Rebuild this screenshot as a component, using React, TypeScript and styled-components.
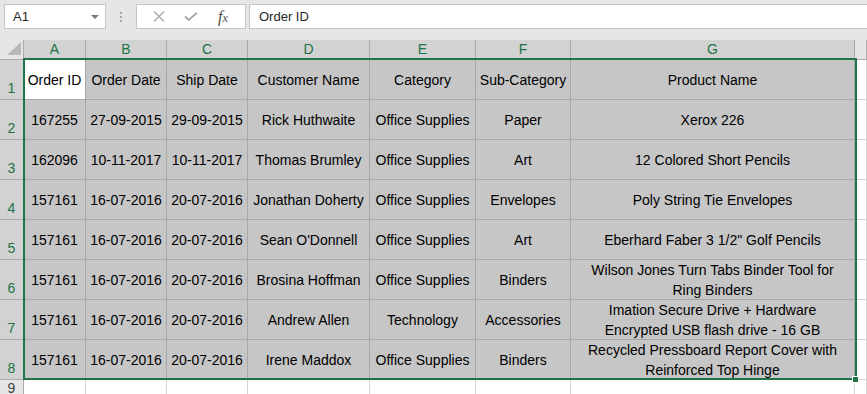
import React from 'react';
import styled, { createGlobalStyle } from 'styled-components';

const GREEN = '#217346';

const COLUMNS = [
  { key: 'A', width: 62 },
  { key: 'B', width: 81 },
  { key: 'C', width: 81 },
  { key: 'D', width: 122 },
  { key: 'E', width: 106 },
  { key: 'F', width: 95 },
  { key: 'G', width: 284, pad: 12 },
];

const ROWS = [
  ['Order ID', 'Order Date', 'Ship Date', 'Customer Name', 'Category', 'Sub-Category', 'Product Name'],
  ['167255', '27-09-2015', '29-09-2015', 'Rick Huthwaite', 'Office Supplies', 'Paper', 'Xerox 226'],
  ['162096', '10-11-2017', '10-11-2017', 'Thomas Brumley', 'Office Supplies', 'Art', '12 Colored Short Pencils'],
  ['157161', '16-07-2016', '20-07-2016', 'Jonathan Doherty', 'Office Supplies', 'Envelopes', 'Poly String Tie Envelopes'],
  ['157161', '16-07-2016', '20-07-2016', "Sean O'Donnell", 'Office Supplies', 'Art', 'Eberhard Faber 3 1/2" Golf Pencils'],
  ['157161', '16-07-2016', '20-07-2016', 'Brosina Hoffman', 'Office Supplies', 'Binders', 'Wilson Jones Turn Tabs Binder Tool for Ring Binders'],
  ['157161', '16-07-2016', '20-07-2016', 'Andrew Allen', 'Technology', 'Accessories', 'Imation Secure Drive + Hardware Encrypted USB flash drive - 16 GB'],
  ['157161', '16-07-2016', '20-07-2016', 'Irene Maddox', 'Office Supplies', 'Binders', 'Recycled Pressboard Report Cover with Reinforced Top Hinge'],
];

const GlobalStyle = createGlobalStyle`
  html, body {
    margin: 0;
    padding: 0;
    background: #ffffff;
  }
  body {
    font-family: 'Liberation Sans', Arial, sans-serif;
  }
  * {
    box-sizing: border-box;
  }
`;

export default function App() {
  return (
    <>
      <GlobalStyle />
      <Page>
        <FormulaBar>
          <NameBox>
            <span>A1</span>
            <DropArrow />
          </NameBox>
          <Grip>
            <Dot />
            <Dot />
            <Dot />
          </Grip>
          <ButtonGroup>
            <IconSlot>
              <svg width="12" height="11" viewBox="0 0 12 11">
                <path d="M1 0.5 L11 10.5 M11 0.5 L1 10.5" stroke="#a6a6a6" strokeWidth="1.2" fill="none" />
              </svg>
            </IconSlot>
            <IconSlot>
              <svg width="14" height="9" viewBox="0 0 14 9">
                <path d="M1 4.5 L4.8 8 L13 0.8" stroke="#a6a6a6" strokeWidth="1.8" fill="none" />
              </svg>
            </IconSlot>
            <FxLabel>
              f<small>x</small>
            </FxLabel>
          </ButtonGroup>
          <FormulaInput>Order ID</FormulaInput>
        </FormulaBar>

        <Sheet>
          <Corner>
            <svg width="14" height="13" viewBox="0 0 14 13">
              <path d="M14 0 L14 13 L0 13 Z" fill="#b8b8b8" />
            </svg>
          </Corner>
          {COLUMNS.map((c) => (
            <ColHeader key={c.key} $selected>
              {c.key}
            </ColHeader>
          ))}
          <ColHeader $selected={false} />

          {ROWS.map((row, r) => (
            <React.Fragment key={r}>
              <RowHeader $selected>{r + 1}</RowHeader>
              {row.map((value, c) => (
                <Cell key={c} $selected $active={r === 0 && c === 0} $pad={COLUMNS[c].pad ?? 3}>
                  <CellText>{value}</CellText>
                </Cell>
              ))}
              <Cell $selected={false} $active={false} $pad={3} />
            </React.Fragment>
          ))}

          <RowHeader $selected={false}>9</RowHeader>
          {COLUMNS.map((c) => (
            <Cell key={c.key} $selected={false} $active={false} $pad={3} />
          ))}
          <Cell $selected={false} $active={false} $pad={3} />

          <Selection>
            <FillHandle />
          </Selection>
        </Sheet>
      </Page>
    </>
  );
}

const Page = styled.div`
  width: 867px;
  height: 394px;
  overflow: hidden;
  background: #ffffff;
`;

const FormulaBar = styled.div`
  display: flex;
  align-items: flex-start;
  height: 40px;
  padding: 4px 0 0 4px;
  background: #e6e6e6;
`;

const NameBox = styled.div`
  display: flex;
  align-items: center;
  justify-content: space-between;
  width: 102px;
  height: 25px;
  padding: 0 6px 0 8px;
  background: #ffffff;
  border: 1px solid #c6c6c6;
  font-size: 13px;
  color: #262626;
`;

const DropArrow = styled.span`
  width: 0;
  height: 0;
  border-left: 4px solid transparent;
  border-right: 4px solid transparent;
  border-top: 4px solid #777777;
  margin-top: 1px;
`;

const Grip = styled.div`
  display: flex;
  flex-direction: column;
  align-items: center;
  justify-content: center;
  gap: 2px;
  width: 30px;
  height: 25px;
`;

const Dot = styled.span`
  width: 2px;
  height: 2px;
  background: #a6a6a6;
`;

const ButtonGroup = styled.div`
  display: flex;
  align-items: center;
  justify-content: space-around;
  width: 110px;
  height: 25px;
  padding: 0 6px;
  background: #ffffff;
  border: 1px solid #c6c6c6;
`;

const IconSlot = styled.span`
  display: flex;
  align-items: center;
  justify-content: center;
  width: 24px;
`;

const FxLabel = styled.span`
  width: 24px;
  text-align: center;
  font-family: 'Liberation Serif', 'Times New Roman', serif;
  font-style: italic;
  font-size: 16px;
  color: #4a4a4a;

  small {
    font-size: 12px;
  }
`;

const FormulaInput = styled.div`
  flex: 1;
  height: 25px;
  margin-left: 3px;
  padding: 0 0 0 9px;
  display: flex;
  align-items: center;
  background: #ffffff;
  border: 1px solid #c6c6c6;
  border-right: none;
  font-size: 13px;
  color: #262626;
`;

const Sheet = styled.div`
  position: relative;
  display: grid;
  grid-template-columns: 24px ${COLUMNS.map((c) => `${c.width}px`).join(' ')} 1fr;
  grid-template-rows: 20px repeat(8, 40px) 20px;
`;

const Corner = styled.div`
  display: flex;
  align-items: flex-end;
  justify-content: flex-end;
  padding: 0 2px 4px 0;
  background: #e6e6e6;
  border-right: 1px solid #ababab;
  border-bottom: 1px solid #ababab;
`;

const ColHeader = styled.div<{ $selected: boolean }>`
  display: flex;
  align-items: center;
  justify-content: center;
  padding-bottom: 1px;
  background: ${(p) => (p.$selected ? '#d2d2d2' : '#e6e6e6')};
  color: ${(p) => (p.$selected ? GREEN : '#444444')};
  border-right: 1px solid #ababab;
  border-bottom: 1px solid #ababab;
  font-size: 14px;
`;

const RowHeader = styled.div<{ $selected: boolean }>`
  display: flex;
  align-items: flex-end;
  justify-content: center;
  padding-bottom: 3px;
  background: ${(p) => (p.$selected ? '#d2d2d2' : '#e6e6e6')};
  color: ${(p) => (p.$selected ? GREEN : '#444444')};
  border-right: 1px solid #ababab;
  border-bottom: 1px solid #ababab;
  font-size: 14px;
`;

const Cell = styled.div<{ $selected: boolean; $active: boolean; $pad: number }>`
  display: flex;
  align-items: center;
  justify-content: center;
  overflow: hidden;
  padding: 0 ${(p) => p.$pad}px;
  background: ${(p) => (p.$active ? '#ffffff' : p.$selected ? '#c6c6c6' : '#ffffff')};
  border-right: 1px solid ${(p) => (p.$selected ? '#a8a8a8' : '#d4d4d4')};
  border-bottom: 1px solid ${(p) => (p.$selected ? '#a8a8a8' : '#d4d4d4')};
  color: #000000;
  font-size: 14px;
`;

const CellText = styled.span`
  text-align: center;
  line-height: 20px;
  max-height: 100%;
`;

const Selection = styled.div`
  position: absolute;
  left: 23px;
  top: 18px;
  width: 834px;
  height: 322px;
  border: 2px solid ${GREEN};
  pointer-events: none;
`;

const FillHandle = styled.span`
  position: absolute;
  right: -4px;
  bottom: -5px;
  width: 7px;
  height: 7px;
  background: ${GREEN};
  border: 1px solid #ffffff;
`;
